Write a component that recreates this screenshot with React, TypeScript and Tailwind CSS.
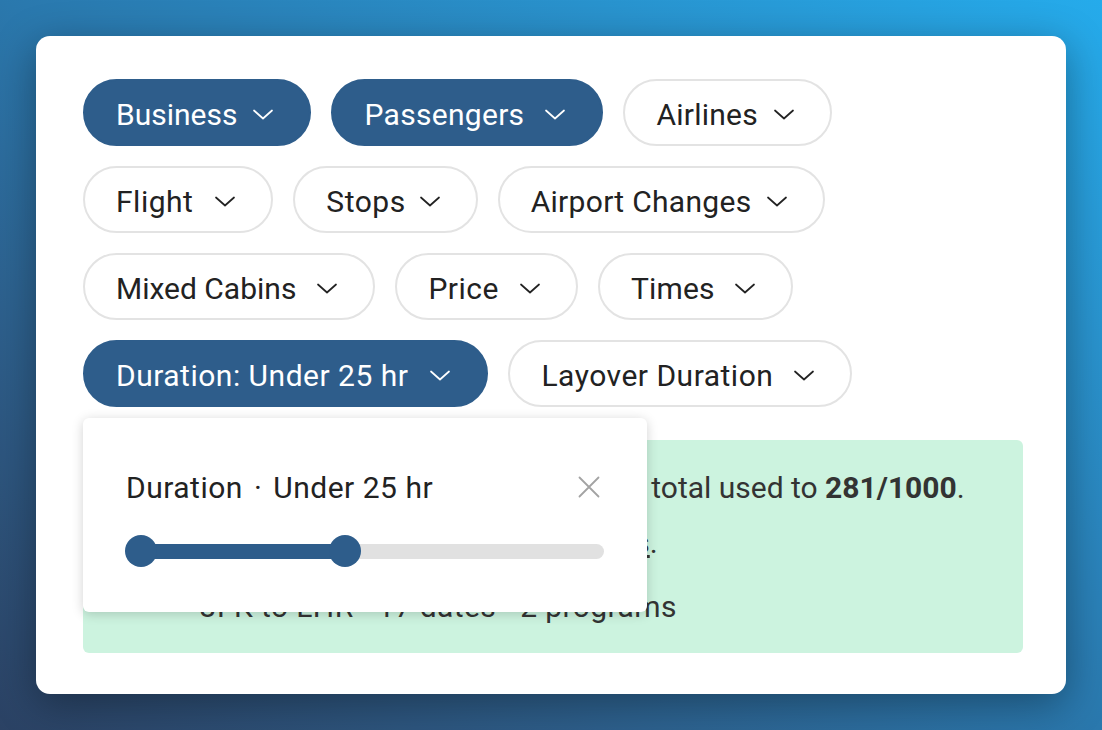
import React from 'react';

interface Filter {
  label: string;
  active?: boolean;
  gap: string;
  track: string;
}

const rows: Filter[][] = [
  [
    { label: 'Business', active: true, gap: 'gap-[16px]', track: 'tracking-normal' },
    { label: 'Passengers', active: true, gap: 'gap-[21px]', track: 'tracking-[0.3px]' },
    { label: 'Airlines', gap: 'gap-[16px]', track: 'tracking-[0.25px]' },
  ],
  [
    { label: 'Flight', gap: 'gap-[22px]', track: 'tracking-[0.5px]' },
    { label: 'Stops', gap: 'gap-[14px]', track: 'tracking-[0.5px]' },
    { label: 'Airport Changes', gap: 'gap-[16px]', track: 'tracking-[0.3px]' },
  ],
  [
    { label: 'Mixed Cabins', gap: 'gap-[21px]', track: 'tracking-normal' },
    { label: 'Price', gap: 'gap-[21px]', track: 'tracking-[0.5px]' },
    { label: 'Times', gap: 'gap-[20px]', track: 'tracking-[0.2px]' },
  ],
  [
    { label: 'Duration: Under 25 hr', active: true, gap: 'gap-[22px]', track: 'tracking-[0.5px]' },
    { label: 'Layover Duration', gap: 'gap-[21px]', track: 'tracking-[0.5px]' },
  ],
];

const Chevron: React.FC = () => (
  <svg width="20" height="11" viewBox="0 0 20 11" fill="none" stroke="currentColor" strokeWidth={1.7} strokeLinecap="round" strokeLinejoin="round">
    <path d="M1 1.5L10 9.5L19 1.5" />
  </svg>
);

const Pill: React.FC<{ filter: Filter }> = ({ filter }) => (
  <button
    className={`flex h-[67px] items-center rounded-full border-2 pl-[31px] pr-[36px] pt-[4px] text-[30px] leading-none ${filter.track} ${filter.gap} ${
      filter.active
        ? 'border-[#2e5d8b] bg-[#2e5d8b] text-white'
        : 'border-[#e3e3e3] bg-white text-[#222222]'
    }`}
  >
    <span>{filter.label}</span>
    <Chevron />
  </button>
);

const DurationPopup: React.FC = () => (
  <div className="absolute left-0 top-[339px] h-[194px] w-[564px] rounded-[6px] bg-white px-[43px] pt-[51px] shadow-[0_2px_12px_rgba(0,0,0,0.18)]">
    <div className="flex h-[36px] items-center justify-between text-[30px] tracking-[0.5px] text-[#222222]">
      <div>
        <span>Duration</span>
        <span className="mx-[11px]">·</span>
        <span>Under 25 hr</span>
      </div>
      <svg className="mr-[4px]" width="22" height="22" viewBox="0 0 22 22" fill="none" stroke="#a3a3a3" strokeWidth={1.8} strokeLinecap="round">
        <path d="M1.5 1.5L20.5 20.5M20.5 1.5L1.5 20.5" />
      </svg>
    </div>
    <div className="mt-[30px] flex h-[32px] items-center">
      <div className="relative h-[15px] w-full rounded-full bg-[#e1e1e1]">
        <div className="absolute left-0 top-0 h-[15px] w-[219px] rounded-full bg-[#2e5d8b]" />
        <div className="absolute left-[-1px] top-[-9px] h-8 w-8 rounded-full bg-[#2e5d8b]" />
        <div className="absolute left-[203px] top-[-9px] h-8 w-8 rounded-full bg-[#2e5d8b]" />
      </div>
    </div>
  </div>
);

const App: React.FC = () => {
  return (
    <div
      className="min-h-screen w-full bg-gradient-to-tr from-[#2b4264] via-[#2a78ad] to-[#25abeb] p-[36px]"
      style={{ fontFamily: 'Roboto, "Liberation Sans", sans-serif' }}
    >
      <div className="h-[658px] w-[1030px] rounded-[14px] bg-white pl-[47px] pr-[43px] pt-[43px] shadow-[0_10px_40px_rgba(0,0,0,0.35)]">
        <div className="relative">
          <div className="flex flex-col gap-[20px]">
            {rows.map((row, i) => (
              <div key={i} className="flex gap-[20px]">
                {row.map((f) => (
                  <Pill key={f.label} filter={f} />
                ))}
              </div>
            ))}
          </div>

          <div className="mt-[33px] h-[213px] w-full rounded-[6px] bg-[#ccf3df] pl-[117px] pt-[30px] text-[30px] text-[#333333]">
            <div className="leading-[36px]">
              These 17 searches will bring your total used to <span className="font-bold">281/1000</span>.
            </div>
            <div className="mt-[19px] leading-[36px]">
              Upgrade to Pro for <span className="underline">more searches</span>.
            </div>
            <div className="mt-[28px] leading-[36px] tracking-[0.4px]">JFK to LHR · 17 dates · 2 programs</div>
          </div>

          <DurationPopup />
        </div>
      </div>
    </div>
  );
};

export default App;
